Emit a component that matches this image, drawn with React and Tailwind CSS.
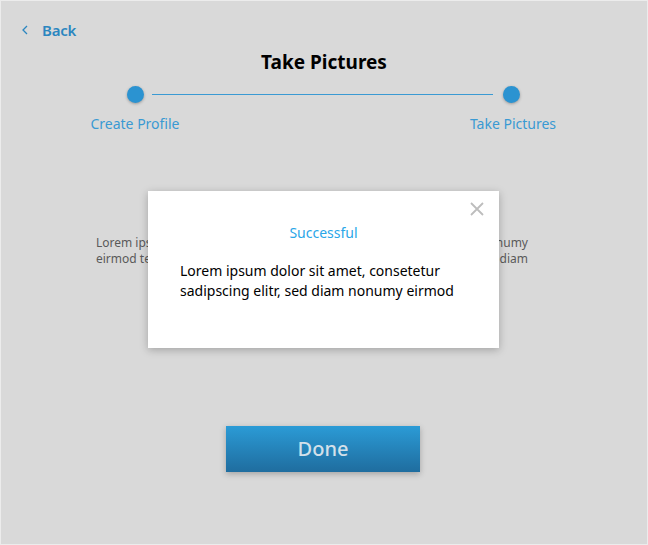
export default function App() {
  return (
    <div
      className="relative w-[648px] h-[545px] bg-[#d9d9d9] border border-[#ececec] overflow-hidden"
      style={{ fontFamily: '"Noto Sans", "Open Sans", sans-serif' }}
    >
      <div className="flex items-center gap-[14px] pl-[21px] pt-[18px] text-[#2b86c0]">
        <svg width="6" height="10" viewBox="0 0 6 10" fill="none" stroke="currentColor" strokeWidth="1.3">
          <path d="M5 1L1 5L5 9" />
        </svg>
        <span className="text-[15px] font-semibold tracking-[-0.2px]">Back</span>
      </div>

      <h1 className="mt-[7px] text-center text-[19px] font-bold text-black leading-[26px]">Take Pictures</h1>

      <div className="mt-[11px] flex items-start justify-between px-[89px]">
        <div className="flex flex-col items-center w-[90px]">
          <div className="w-[17px] h-[17px] rounded-full bg-[#2b93d1] shadow-[0_1px_3px_rgba(0,0,0,0.3)]" />
          <span className="mt-[10px] text-[14px] text-[#3a9ad3] whitespace-nowrap">Create Profile</span>
        </div>
        <div className="flex-1 mt-[8px] h-px bg-[#3a9ad3] ml-[-28px] mr-[-25px]" />
        <div className="flex flex-col items-center w-[90px]">
          <div className="w-[17px] h-[17px] rounded-full bg-[#2b93d1] shadow-[0_1px_3px_rgba(0,0,0,0.3)] -translate-x-[2px]" />
          <span className="mt-[10px] text-[14px] text-[#3a9ad3] whitespace-nowrap">Take Pictures</span>
        </div>
      </div>

      <div className="mt-[101px] flex justify-between pl-[95px] pr-[119px] text-[12px] leading-[16px] text-[#5a5a5a]">
        <p className="w-[180px]">Lorem ipsum dolor sit amet, eirmod tempor invidunt</p>
        <p className="w-[180px] text-right">sed diam eirmod nonumy tempor sed diam</p>
      </div>

      <div className="mt-[159px] flex justify-center pr-[2px]">
        <button className="w-[194px] h-[46px] bg-gradient-to-b from-[#2b9bd6] to-[#1f6d9f] text-[#d3e0ea] text-[20px] font-medium shadow-[0_2px_6px_rgba(0,0,0,0.25)]">
          Done
        </button>
      </div>

      <div className="absolute left-[147px] top-[190px] w-[351px] h-[157px] bg-white shadow-[0_2px_8px_rgba(0,0,0,0.25)]">
        <button className="absolute right-[14px] top-[10px] text-[#bdbdbd]">
          <svg width="16" height="16" viewBox="0 0 16 16" stroke="currentColor" strokeWidth="1.8">
            <path d="M2 2L14 14M14 2L2 14" />
          </svg>
        </button>
        <p className="pt-[31px] text-center text-[14px] text-[#2aa6e8]">Successful</p>
        <p className="mt-[18px] pl-[32px] pr-[20px] text-[14px] leading-[20px] text-black">
          Lorem ipsum dolor sit amet, consetetur sadipscing elitr, sed diam nonumy eirmod
        </p>
      </div>
    </div>
  );
}
